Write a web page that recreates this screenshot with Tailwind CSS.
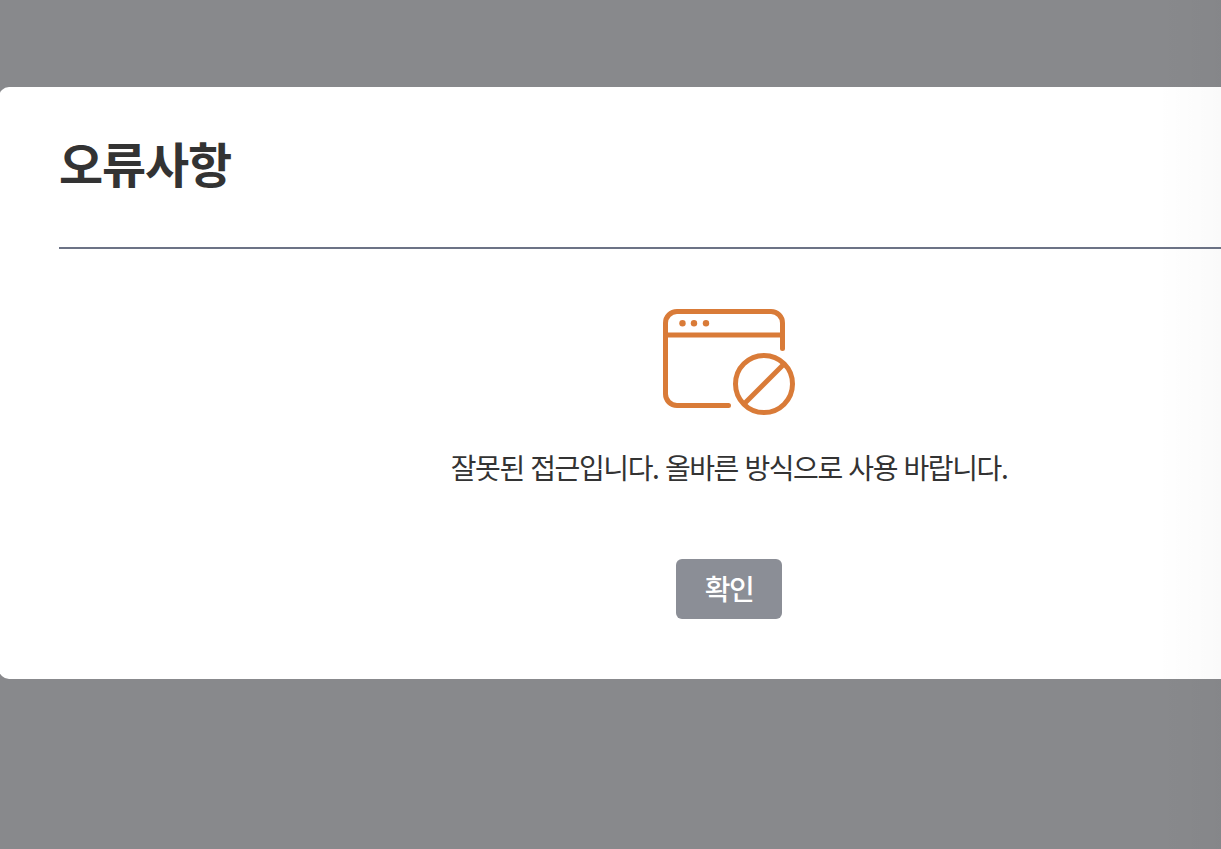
<!DOCTYPE html>
<html lang="ko">
<head>
<meta charset="utf-8">
<meta name="viewport" content="width=device-width, initial-scale=1">
<title>오류사항</title>
<script src="https://cdn.jsdelivr.net/npm/@tailwindcss/browser@4"></script>
</head>
<body class="relative min-h-screen bg-[#88898c] pt-[87px] font-['Noto_Sans_CJK_KR',sans-serif] text-[#333333]">
<main class="-ml-px rounded-l-[10px] bg-white pt-10 pb-[60px] pl-[60px]">
  <h1 class="border-b-2 border-[#6c7386] pb-[50px] text-5xl leading-[70px] font-bold tracking-tight">오류사항</h1>
  <div class="flex flex-col items-center pt-[60px] pl-[178px]">
    <svg class="h-[106px] w-[132px]" viewBox="0 0 132 106" fill="none" stroke="#d97b38" stroke-width="5" aria-hidden="true">
      <path d="M119.500 39.500V14a11.500 11.500 0 0 0-11.500-11.500H14A11.500 11.500 0 0 0 2.500 14v71A11.500 11.500 0 0 0 14 96.500h51.500" stroke-linecap="round"/>
      <path d="M3 26h116"/>
      <g fill="#d97b38" stroke="none"><circle cx="19.500" cy="14.200" r="3.200"/><circle cx="31" cy="14.200" r="3.200"/><circle cx="43" cy="14.200" r="3.200"/></g>
      <circle cx="101" cy="75" r="28.500"/>
      <path d="m81 95 40-40"/>
    </svg>
    <p class="mt-8 text-[28px] leading-10 tracking-tighter">잘못된 접근입니다. 올바른 방식으로 사용 바랍니다.</p>
    <button type="button" class="mt-[72px] h-[60px] rounded-[6px] bg-[#8b8e96] px-[29px] pb-0.5 text-[28px] font-medium tracking-tighter text-white">확인</button>
  </div>
</main>
<div class="pointer-events-none absolute inset-y-0 right-0 w-16 bg-linear-to-r from-black/0 to-black/2" aria-hidden="true"></div>
</body>
</html>
